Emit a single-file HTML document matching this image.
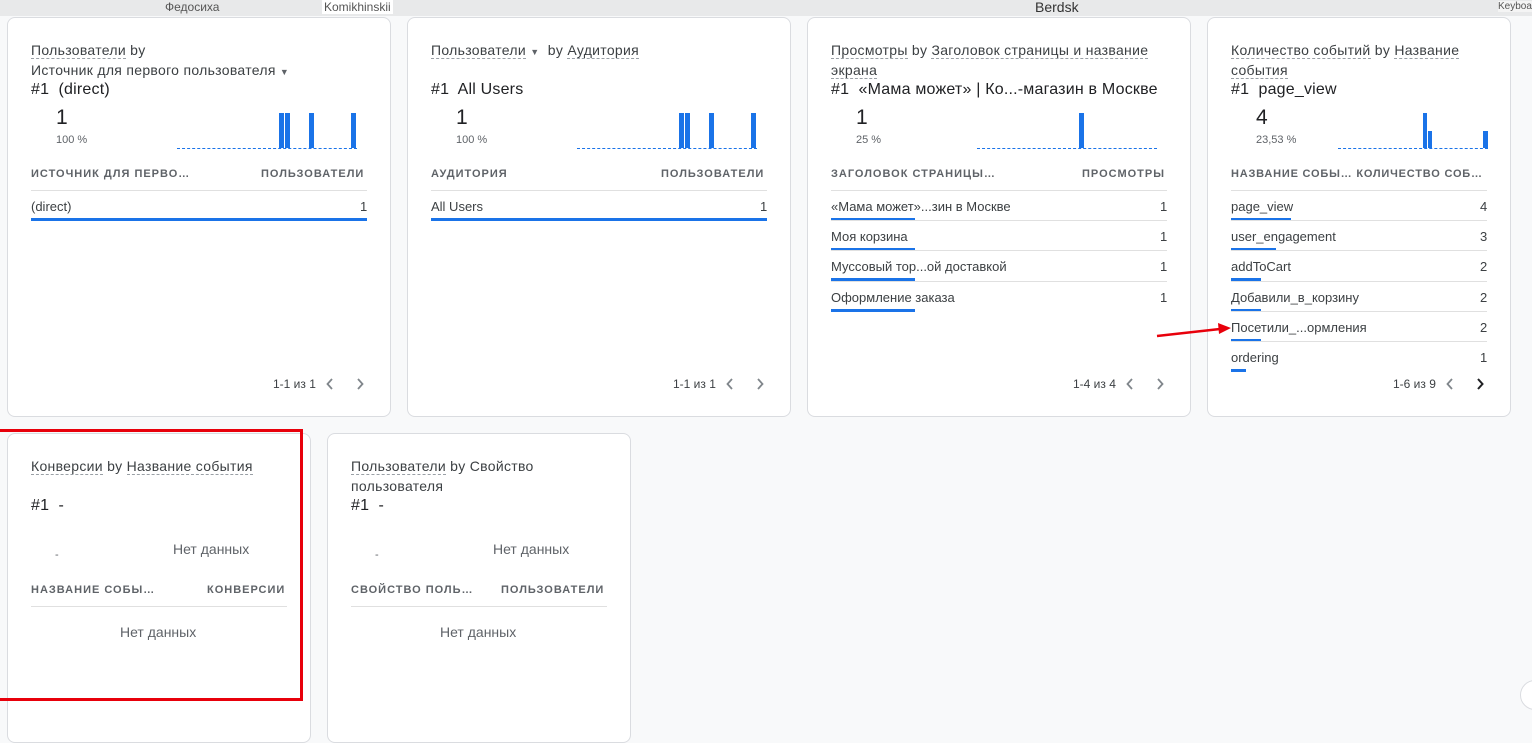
<!DOCTYPE html>
<html><head><meta charset="utf-8"><style>
*{margin:0;padding:0;box-sizing:border-box}
body{width:1532px;height:724px;overflow:hidden;background:#f8f9fa;font-family:"Liberation Sans",Arial,sans-serif;position:relative;color:#202124}
.a{position:absolute;white-space:nowrap}
.map{position:absolute;left:0;top:0;width:1532px;height:16px;background:#e8e9ea;font-size:12px;color:#555}
.card{position:absolute;background:#fff;border:1px solid #dadce0;border-radius:8px}
.t{font-size:14px;color:#3c4043;line-height:20px;letter-spacing:.3px}
.u{border-bottom:1px dashed #9aa0a6}
.h{font-size:16px;color:#202124;letter-spacing:.2px}
.big{font-size:21px;color:#202124}
.pct{font-size:11px;color:#5f6368}
.hd{font-size:11px;color:#5f6368;letter-spacing:1px;font-weight:bold}
.row{font-size:13px;color:#3c4043}
.line{position:absolute;height:1px;background:#e0e0e0}
.bl{position:absolute;height:3px;background:#1a73e8}
.base{position:absolute;height:0;border-top:1px dashed #1a73e8}
.bar{position:absolute;background:#1a73e8}
.pg{font-size:12px;color:#3c4043}
.nd{font-size:14px;color:#5f6368}
svg.c{position:absolute}
</style></head><body>
<div class="map"><span class="a" style="left:165px;top:0">Федосиха</span><span class="a" style="left:322px;top:0;background:#fff;padding:0 2px">Komikhinskii</span><span class="a" style="left:1035px;top:-1px;font-size:14px;color:#333">Berdsk</span><span class="a" style="left:1498px;top:1px;font-size:10px;background:#f4f4f4">Keyboa</span></div>

<!-- Card 1 -->
<div class="card" style="left:7px;top:17px;width:384px;height:400px"></div>
<div class="a t" style="left:31px;top:40px"><span class="u">Пользователи</span> by</div>
<div class="a t" style="left:31px;top:60px"><span>Источник для первого пользователя</span> <span style="font-size:9px;color:#5f6368">▼</span></div>
<div class="a h" style="left:31px;top:81px">#1&nbsp; (direct)</div>
<div class="a big" style="left:56px;top:106px">1</div>
<div class="a pct" style="left:56px;top:134px">100 %</div>
<div class="base" style="left:177px;top:148px;width:180px"></div>
<div class="bar" style="left:279px;top:113px;width:5px;height:35px"></div>
<div class="bar" style="left:285px;top:113px;width:5px;height:35px"></div>
<div class="bar" style="left:309px;top:113px;width:5px;height:35px"></div>
<div class="bar" style="left:351px;top:113px;width:5px;height:35px"></div>
<div class="a hd" style="left:31px;top:168px">ИСТОЧНИК ДЛЯ ПЕРВО…</div>
<div class="a hd" style="left:261px;top:168px">ПОЛЬЗОВАТЕЛИ</div>
<div class="line" style="left:31px;top:190px;width:336px"></div>
<div class="a row" style="left:31px;top:199px">(direct)</div><div class="a row" style="left:360px;top:199px">1</div>
<div class="bl" style="left:31px;top:218px;width:336px"></div>
<div class="a pg" style="left:273px;top:377px">1-1 из 1</div>
<svg class="c" style="left:326px;top:378px" width="8" height="12"><path d="M6 1L1.5 6L6 11" fill="none" stroke="#80868b" stroke-width="1.8"/></svg>
<svg class="c" style="left:356px;top:378px" width="8" height="12"><path d="M2 1L6.5 6L2 11" fill="none" stroke="#80868b" stroke-width="1.8"/></svg>

<!-- Card 2 -->
<div class="card" style="left:407px;top:17px;width:384px;height:400px"></div>
<div class="a t" style="left:431px;top:40px"><span class="u">Пользователи</span> <span style="font-size:9px;color:#5f6368">▼</span>&nbsp; by <span class="u">Аудитория</span></div>
<div class="a h" style="left:431px;top:81px">#1&nbsp; All Users</div>
<div class="a big" style="left:456px;top:106px">1</div>
<div class="a pct" style="left:456px;top:134px">100 %</div>
<div class="base" style="left:577px;top:148px;width:180px"></div>
<div class="bar" style="left:679px;top:113px;width:5px;height:35px"></div>
<div class="bar" style="left:685px;top:113px;width:5px;height:35px"></div>
<div class="bar" style="left:709px;top:113px;width:5px;height:35px"></div>
<div class="bar" style="left:751px;top:113px;width:5px;height:35px"></div>
<div class="a hd" style="left:431px;top:168px">АУДИТОРИЯ</div>
<div class="a hd" style="left:661px;top:168px">ПОЛЬЗОВАТЕЛИ</div>
<div class="line" style="left:431px;top:190px;width:336px"></div>
<div class="a row" style="left:431px;top:199px">All Users</div><div class="a row" style="left:760px;top:199px">1</div>
<div class="bl" style="left:431px;top:218px;width:336px"></div>
<div class="a pg" style="left:673px;top:377px">1-1 из 1</div>
<svg class="c" style="left:726px;top:378px" width="8" height="12"><path d="M6 1L1.5 6L6 11" fill="none" stroke="#80868b" stroke-width="1.8"/></svg>
<svg class="c" style="left:756px;top:378px" width="8" height="12"><path d="M2 1L6.5 6L2 11" fill="none" stroke="#80868b" stroke-width="1.8"/></svg>

<!-- Card 3 -->
<div class="card" style="left:807px;top:17px;width:384px;height:400px"></div>
<div class="a t" style="left:831px;top:40px"><span class="u">Просмотры</span> by <span class="u">Заголовок страницы и название</span></div>
<div class="a t" style="left:831px;top:60px"><span class="u">экрана</span></div>
<div class="a h" style="left:831px;top:81px">#1&nbsp; «Мама может» | Ко...-магазин в Москве</div>
<div class="a big" style="left:856px;top:106px">1</div>
<div class="a pct" style="left:856px;top:134px">25 %</div>
<div class="base" style="left:977px;top:148px;width:180px"></div>
<div class="bar" style="left:1079px;top:113px;width:5px;height:35px"></div>
<div class="a hd" style="left:831px;top:168px">ЗАГОЛОВОК СТРАНИЦЫ…</div>
<div class="a hd" style="left:1082px;top:168px">ПРОСМОТРЫ</div>
<div class="line" style="left:831px;top:190px;width:336px"></div>
<div class="a row" style="left:831px;top:199px">«Мама может»...зин в Москве</div><div class="a row" style="left:1160px;top:199px">1</div>
<div class="bl" style="left:831px;top:218px;width:84px"></div>
<div class="line" style="left:831px;top:220px;width:336px"></div>
<div class="a row" style="left:831px;top:229px">Моя корзина</div><div class="a row" style="left:1160px;top:229px">1</div>
<div class="bl" style="left:831px;top:248px;width:84px"></div>
<div class="line" style="left:831px;top:250px;width:336px"></div>
<div class="a row" style="left:831px;top:259px">Муссовый тор...ой доставкой</div><div class="a row" style="left:1160px;top:259px">1</div>
<div class="bl" style="left:831px;top:278px;width:84px"></div>
<div class="line" style="left:831px;top:281px;width:336px"></div>
<div class="a row" style="left:831px;top:290px">Оформление заказа</div><div class="a row" style="left:1160px;top:290px">1</div>
<div class="bl" style="left:831px;top:309px;width:84px"></div>
<div class="a pg" style="left:1073px;top:377px">1-4 из 4</div>
<svg class="c" style="left:1126px;top:378px" width="8" height="12"><path d="M6 1L1.5 6L6 11" fill="none" stroke="#80868b" stroke-width="1.8"/></svg>
<svg class="c" style="left:1156px;top:378px" width="8" height="12"><path d="M2 1L6.5 6L2 11" fill="none" stroke="#80868b" stroke-width="1.8"/></svg>

<!-- Card 4 -->
<div class="card" style="left:1207px;top:17px;width:304px;height:400px"></div>
<div class="a t" style="left:1231px;top:40px"><span class="u">Количество событий</span> by <span class="u">Название</span></div>
<div class="a t" style="left:1231px;top:60px"><span class="u">события</span></div>
<div class="a h" style="left:1231px;top:81px">#1&nbsp; page_view</div>
<div class="a big" style="left:1256px;top:106px">4</div>
<div class="a pct" style="left:1256px;top:134px">23,53 %</div>
<div class="base" style="left:1338px;top:148px;width:150px"></div>
<div class="bar" style="left:1423px;top:113px;width:4px;height:35px"></div>
<div class="bar" style="left:1428px;top:131px;width:4px;height:17px"></div>
<div class="bar" style="left:1483px;top:131px;width:5px;height:17px"></div>
<div class="a hd" style="left:1231px;top:168px;letter-spacing:.8px">НАЗВАНИЕ СОБЫ… КОЛИЧЕСТВО СОБ…</div>
<div class="line" style="left:1231px;top:190px;width:256px"></div>
<div class="a row" style="left:1231px;top:199px">page_view</div><div class="a row" style="left:1480px;top:199px">4</div>
<div class="bl" style="left:1231px;top:218px;width:60px"></div>
<div class="line" style="left:1231px;top:220px;width:256px"></div>
<div class="a row" style="left:1231px;top:229px">user_engagement</div><div class="a row" style="left:1480px;top:229px">3</div>
<div class="bl" style="left:1231px;top:248px;width:45px"></div>
<div class="line" style="left:1231px;top:250px;width:256px"></div>
<div class="a row" style="left:1231px;top:259px">addToCart</div><div class="a row" style="left:1480px;top:259px">2</div>
<div class="bl" style="left:1231px;top:278px;width:30px"></div>
<div class="line" style="left:1231px;top:281px;width:256px"></div>
<div class="a row" style="left:1231px;top:290px">Добавили_в_корзину</div><div class="a row" style="left:1480px;top:290px">2</div>
<div class="bl" style="left:1231px;top:309px;width:30px"></div>
<div class="line" style="left:1231px;top:311px;width:256px"></div>
<div class="a row" style="left:1231px;top:320px">Посетили_...ормления</div><div class="a row" style="left:1480px;top:320px">2</div>
<div class="bl" style="left:1231px;top:339px;width:30px"></div>
<div class="line" style="left:1231px;top:341px;width:256px"></div>
<div class="a row" style="left:1231px;top:350px">ordering</div><div class="a row" style="left:1480px;top:350px">1</div>
<div class="bl" style="left:1231px;top:369px;width:15px"></div>
<div class="a pg" style="left:1393px;top:377px">1-6 из 9</div>
<svg class="c" style="left:1446px;top:378px" width="8" height="12"><path d="M6 1L1.5 6L6 11" fill="none" stroke="#80868b" stroke-width="1.8"/></svg>
<svg class="c" style="left:1476px;top:378px" width="8" height="12"><path d="M2 1L6.5 6L2 11" fill="none" stroke="#202124" stroke-width="2"/></svg>

<!-- Card 5 -->
<div class="card" style="left:7px;top:433px;width:304px;height:310px"></div>
<div class="a t" style="left:31px;top:456px"><span class="u">Конверсии</span> by <span class="u">Название события</span></div>
<div class="a h" style="left:31px;top:497px">#1&nbsp; -</div>
<div class="a pct" style="left:55px;top:549px">-</div>
<div class="a nd" style="left:173px;top:541px">Нет данных</div>
<div class="a hd" style="left:31px;top:584px">НАЗВАНИЕ СОБЫ…</div>
<div class="a hd" style="left:207px;top:584px">КОНВЕРСИИ</div>
<div class="line" style="left:31px;top:606px;width:256px"></div>
<div class="a nd" style="left:120px;top:624px">Нет данных</div>

<!-- Card 6 -->
<div class="card" style="left:327px;top:433px;width:304px;height:310px"></div>
<div class="a t" style="left:351px;top:456px"><span class="u">Пользователи</span> by Свойство</div>
<div class="a t" style="left:351px;top:476px">пользователя</div>
<div class="a h" style="left:351px;top:497px">#1&nbsp; -</div>
<div class="a pct" style="left:375px;top:549px">-</div>
<div class="a nd" style="left:493px;top:541px">Нет данных</div>
<div class="a hd" style="left:351px;top:584px">СВОЙСТВО ПОЛЬ…</div>
<div class="a hd" style="left:501px;top:584px">ПОЛЬЗОВАТЕЛИ</div>
<div class="line" style="left:351px;top:606px;width:256px"></div>
<div class="a nd" style="left:440px;top:624px">Нет данных</div>

<!-- red box -->
<div style="position:absolute;left:-3px;top:429px;width:306px;height:272px;border:3px solid #e8000b"></div>
<svg style="position:absolute;left:0;top:0" width="1532" height="724"><line x1="1157" y1="336" x2="1220" y2="329" stroke="#e8000b" stroke-width="2.5"/><polygon points="1231,328 1218,323 1219,334" fill="#e8000b"/></svg>
<div style="position:absolute;left:1520px;top:680px;width:30px;height:30px;border-radius:50%;background:#fff;border:1px solid #dadce0"></div>
</body></html>
